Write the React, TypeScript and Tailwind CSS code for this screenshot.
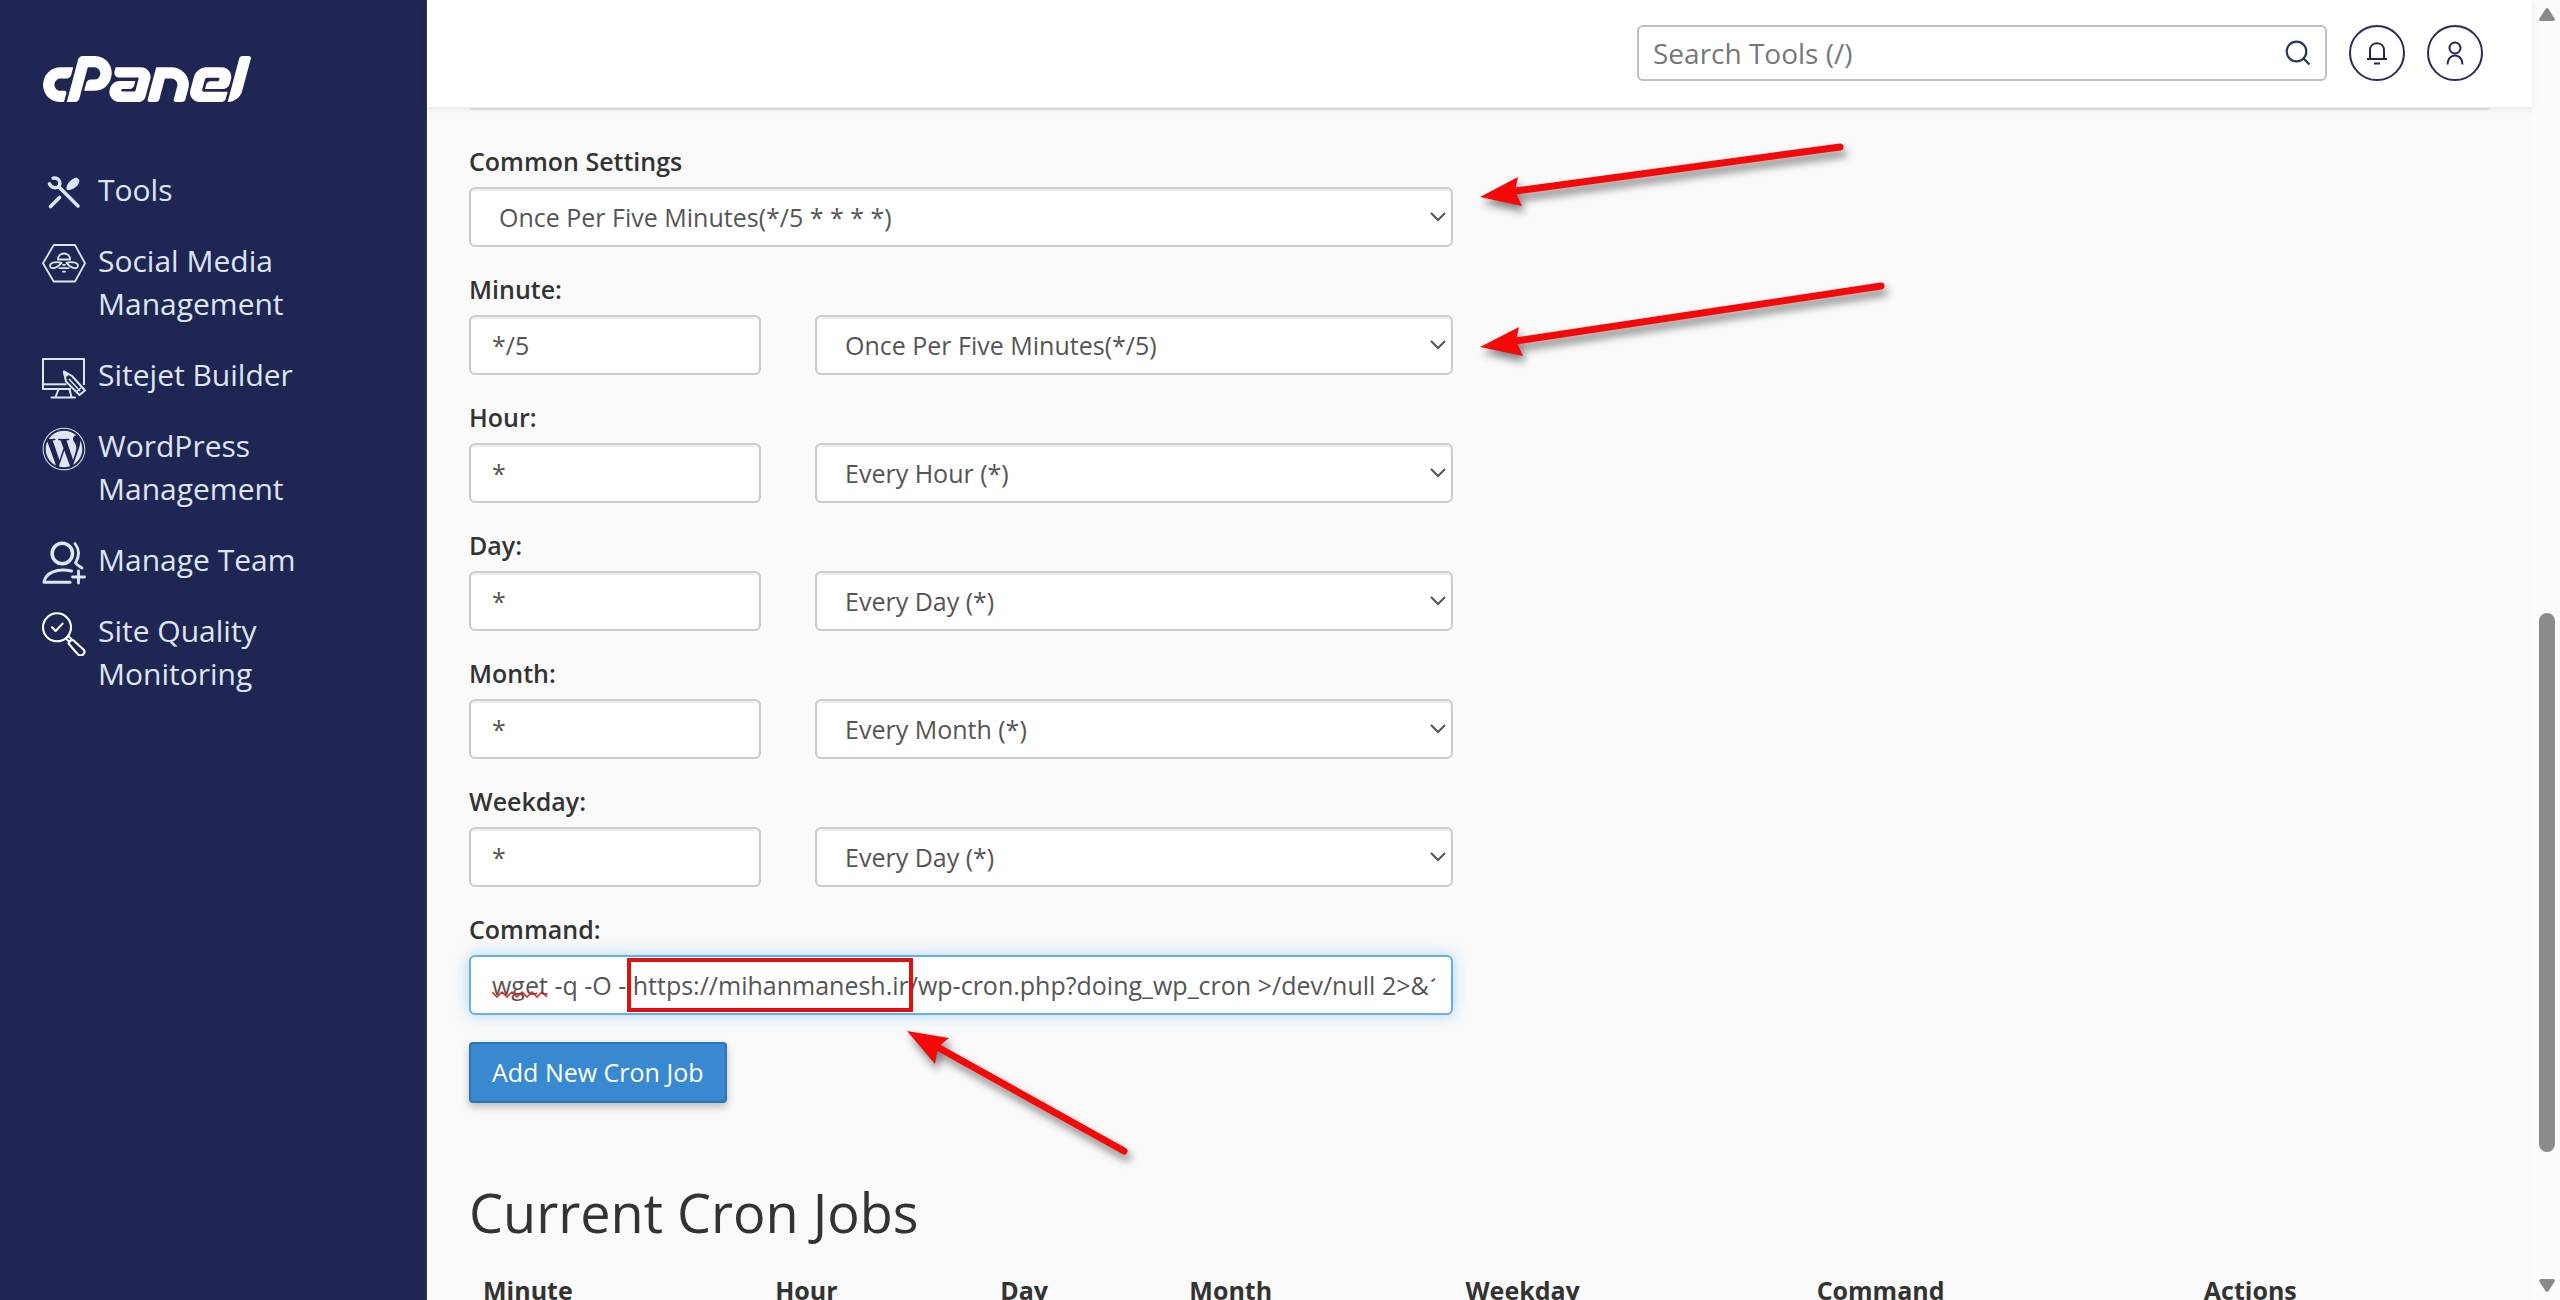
import { type ReactNode } from "react";
import { SiCpanel } from "react-icons/si";
import { FaWordpress } from "react-icons/fa";

function ToolsIcon() {
  return (
    <svg viewBox="0 0 44 44" className="size-11" fill="none" stroke="currentColor" aria-hidden="true">
      <path d="M11 7.200c4.600-1 7.800 2.400 6.600 7-3.200 4-8.200 3-10.200-1.400" strokeWidth="3.400" strokeLinecap="round" />
      <path d="M17 16l19 19" strokeWidth="3.600" strokeLinecap="round" />
      <path d="M8.500 35.500l9-9" strokeWidth="3.600" strokeLinecap="round" />
      <path d="M25 18.500c-.5-4.500 3-10 9.500-11.500l2.500 2c-.5 6-5 8.500-9.500 9.500z" fill="currentColor" strokeWidth="1" strokeLinejoin="round" />
    </svg>
  );
}

function BeeIcon() {
  return (
    <svg viewBox="0 0 44 44" className="size-11" fill="none" stroke="currentColor" strokeWidth="1.800" strokeLinejoin="round" strokeLinecap="round" aria-hidden="true">
      <path d="M1 21.300L11.700 3h21.300L43 21.300 33 39.500H11.700z" />
      <path d="M16 17.500c0-8 12-8 12 0z" />
      <path d="M19.500 20.800c-4-.8-9.500-.6-11.300 1.700-1 2.600 1 4 3.300 3.700 3.500-.6 5.700-2.700 8-5.400z" />
      <path d="M24.500 20.800c4-.8 9.500-.6 11.300 1.700 1 2.600-1 4-3.300 3.700-3.500-.6-5.700-2.700-8-5.400z" />
      <path d="M21 22.800h2M17.500 26.200h9M21 29.700h2" />
    </svg>
  );
}

function BuilderIcon() {
  return (
    <svg viewBox="0 0 44 44" className="size-11" fill="none" stroke="currentColor" strokeWidth="2" strokeLinejoin="round" aria-hidden="true">
      <path d="M42 29V3H1v30h28" />
      <path d="M1 28.300h23.500" />
      <path d="M16.500 33.500l-3 7.500M27.500 33.500l2 7.500M9.500 41.500h23.500" strokeLinecap="round" />
      <path d="M22 15.500l2 10L37.500 39l5.500-4.500L30 20z" />
      <path d="M27 23l11 12M34.500 35.800l5-4.300" strokeWidth="1.500" />
      <path d="M22 15.500l1 5 3.500-2.500z" fill="currentColor" />
    </svg>
  );
}

function TeamIcon() {
  return (
    <svg viewBox="0 0 44 44" className="size-11" fill="none" stroke="currentColor" strokeLinecap="round" aria-hidden="true">
      <circle cx="20.300" cy="12.500" r="10.200" strokeWidth="3.500" />
      <path d="M33 2.500c4.500 6 4.500 13 .5 19.500 2 2.500 4.500 3.500 6.500 5" strokeWidth="2.800" strokeLinejoin="round" />
      <path d="M28 41.300H2C3.500 31.500 15 27 29.500 30" strokeWidth="3.100" strokeLinejoin="round" />
      <path d="M30.500 36h12M36.500 30v12" strokeWidth="2.800" />
    </svg>
  );
}

function QualityIcon() {
  return (
    <svg viewBox="0 0 44 44" className="size-11" fill="none" stroke="#fff" strokeWidth="2.100" strokeLinecap="round" strokeLinejoin="round" aria-hidden="true">
      <circle cx="15" cy="15.300" r="14" />
      <path d="M10 15.300l3.600 3.700 7-7.400" />
      <path d="M24.500 27l3 3M27 24.800l3 3" />
      <path d="M26.500 31.500c.5-2 2-3.500 4.500-3.500l10.500 9.500c3 3.500-2 7.800-5.500 5z" />
    </svg>
  );
}

const menu: { label: string; icon: ReactNode }[] = [
  { label: "Tools", icon: <ToolsIcon /> },
  { label: "Social Media Management", icon: <BeeIcon /> },
  { label: "Sitejet Builder", icon: <BuilderIcon /> },
  { label: "WordPress Management", icon: <FaWordpress className="size-11" aria-hidden="true" /> },
  { label: "Manage Team", icon: <TeamIcon /> },
  { label: "Site Quality Monitoring", icon: <QualityIcon /> },
];

function Sidebar() {
  return (
    <aside className="w-[427px] shrink-0 border-r border-[#3a3a48] bg-[#1f2654] px-[42px] pt-14 text-[#dfe5f2]">
      <a href="#home" aria-label="cPanel" className="block text-white">
        <SiCpanel viewBox="0 9.3449 24 5.3102" className="h-[46px] w-[210px]" aria-hidden="true" />
      </a>
      <nav className="mt-[66px]">
        <ul className="flex flex-col gap-7">
          {menu.map((item) => (
            <li key={item.label}>
              <a href="#menu" className="flex items-start gap-3 text-[30px] leading-[43px]">
                <span className="-mb-1 mt-[3px] size-11 shrink-0">{item.icon}</span>
                <span className="max-w-[220px]">{item.label}</span>
              </a>
            </li>
          ))}
        </ul>
      </nav>
    </aside>
  );
}

function TopBar() {
  return (
    <header className="relative z-10 flex h-[107px] shrink-0 items-start justify-end gap-[22px] bg-white pr-[49px] pt-[25px] text-[#24264f] shadow-[0_2px_8px_rgba(0,0,0,0.08)]">
      <div className="flex h-14 w-[690px] items-center rounded-md border-2 border-[#bfbfbf] bg-white pr-3.5">
        <input
          type="text"
          aria-label="Search Tools"
          placeholder="Search Tools (/)"
          className="min-w-0 flex-1 bg-transparent px-3.5 text-[28px] text-[#777] outline-none placeholder:text-[#777]"
        />
        <button type="button" aria-label="Search">
          <svg viewBox="0 0 26 26" className="size-[26px]" fill="none" stroke="#24385a" strokeWidth="2.200" aria-hidden="true">
            <circle cx="11.500" cy="11.500" r="9.800" />
            <path d="M18.500 18.500l6 6" />
          </svg>
        </button>
      </div>
      <button type="button" aria-label="Notifications" className="flex size-14 items-center justify-center rounded-full border-2 border-[#2b2c58]">
        <svg viewBox="0 0 22 24" className="h-6 w-[22px]" fill="none" stroke="currentColor" strokeWidth="2" aria-hidden="true">
          <path d="M4 18V9c0-9 14-9 14 0v9M1 18h20M8 22.500h6" />
        </svg>
      </button>
      <button type="button" aria-label="Account" className="flex size-14 items-center justify-center rounded-full border-2 border-[#2b2c58]">
        <svg viewBox="0 0 22 24" className="h-6 w-[22px]" fill="none" stroke="currentColor" strokeWidth="2" aria-hidden="true">
          <circle cx="11" cy="7" r="5.500" />
          <path d="M3.500 23.500c0-12 15-12 15 0" />
        </svg>
      </button>
    </header>
  );
}

function SelectBox({ id, label, value }: { id: string; label?: string; value: string }) {
  return (
    <div className="relative min-w-0 flex-1">
      <select
        id={id}
        aria-label={label}
        className="h-[60px] w-full appearance-none rounded-md border-2 border-[#ccc] bg-white pl-7 pr-10 pt-0.5 text-[25px] text-[#555] shadow-[inset_0_2px_2px_rgba(0,0,0,0.07)]"
      >
        <option>{value}</option>
      </select>
      <svg viewBox="0 0 16 10" className="pointer-events-none absolute right-[7px] top-[25px] h-2.5 w-4" fill="none" stroke="#555" strokeWidth="2" aria-hidden="true">
        <path d="M1 1l7 7 7-7" />
      </svg>
    </div>
  );
}

const labelClass = "block text-[25px] font-semibold leading-9 text-[#333]";

const fields = [
  { id: "minute", label: "Minute:", value: "*/5", option: "Once Per Five Minutes(*/5)" },
  { id: "hour", label: "Hour:", value: "*", option: "Every Hour (*)" },
  { id: "day", label: "Day:", value: "*", option: "Every Day (*)" },
  { id: "month", label: "Month:", value: "*", option: "Every Month (*)" },
  { id: "weekday", label: "Weekday:", value: "*", option: "Every Day (*)" },
];

/* Red pointer arrows drawn over the form; coordinates start at the form's top left corner. */
function Arrows() {
  return (
    <svg
      className="pointer-events-none absolute left-0 top-0 h-full w-full overflow-visible drop-shadow-[3px_6px_4px_rgba(0,0,0,0.5)]"
      fill="#f60808"
      stroke="#f60808"
      aria-hidden="true"
    >
      <g strokeWidth="7" strokeLinecap="round">
        <path d="M1047 48L1371 4" />
        <path d="M1047 198L1412 143" />
        <path d="M470 905L655 1008" />
      </g>
      <g stroke="none">
        <path d="M1011 54L1049 34 1046 48 1053 63z" />
        <path d="M1011 204L1050 184 1047 198 1054 213z" />
        <path d="M438 888L480 895 469 904 466 921z" />
      </g>
    </svg>
  );
}

function CronForm() {
  return (
    <form className="relative flex w-full max-w-[984px] flex-col gap-6" onSubmit={(e) => e.preventDefault()}>
      <div>
        <label htmlFor="common" className={labelClass}>Common Settings</label>
        <div className="mt-2 flex">
          <SelectBox id="common" value="Once Per Five Minutes(*/5 * * * *)" />
        </div>
      </div>
      {fields.map((f) => (
        <div key={f.id}>
          <label htmlFor={f.id} className={labelClass}>{f.label}</label>
          <div className="mt-2 flex gap-[54px]">
            <input
              id={f.id}
              defaultValue={f.value}
              spellCheck={false}
              className="h-[60px] w-[292px] rounded-md border-2 border-[#ccc] bg-white px-[21px] text-[25px] text-[#555] shadow-[inset_0_2px_2px_rgba(0,0,0,0.07)]"
            />
            <SelectBox id={f.id + "-preset"} label={f.label + " preset"} value={f.option} />
          </div>
        </div>
      ))}
      <div>
        <label htmlFor="command" className={labelClass}>Command:</label>
        <div className="relative mt-2">
          <input
            id="command"
            spellCheck={false}
            defaultValue="wget -q -O - https://mihanmanesh.ir/wp-cron.php?doing_wp_cron >/dev/null 2>&1"
            className="block h-[60px] w-full rounded-md border-2 border-[#66afe9] bg-white pl-[21px] pr-4 text-[25px] text-[#555] shadow-[0_0_16px_rgba(102,175,233,0.5)] outline-none"
          />
          <svg viewBox="0 0 56 7" className="pointer-events-none absolute left-[23px] top-9 h-[7px] w-14" fill="none" stroke="#e02020" strokeWidth="1.500" aria-hidden="true">
            <path d="M0 1l5 5 5-5 5 5 5-5 5 5 5-5 5 5 5-5 5 5 5-5 5 5" />
          </svg>
          <span className="pointer-events-none absolute left-[158px] top-[3px] h-[54px] w-[286px] border-4 border-[#e01010]" />
        </div>
      </div>
      <button
        type="submit"
        className="mt-[3px] h-[61px] self-start rounded border-2 border-[#2e75b3] bg-[#3889cf] px-[21px] text-[25px] text-white shadow-[0_4px_8px_rgba(0,0,0,0.25)]"
      >
        Add New Cron Job
      </button>
      <Arrows />
    </form>
  );
}

function JobsTable() {
  return (
    <table className="mt-[30px] w-full table-fixed text-left text-[25px] leading-9 text-[#333]">
      <thead>
        <tr>
          <th scope="col" className="w-[292px] px-3.5">Minute</th>
          <th scope="col" className="w-[225px] px-3.5">Hour</th>
          <th scope="col" className="w-[189px] px-3.5">Day</th>
          <th scope="col" className="w-[276px] px-3.5">Month</th>
          <th scope="col" className="w-[351px] px-3.5">Weekday</th>
          <th scope="col" className="w-[387px] px-3.5">Command</th>
          <th scope="col" className="w-[300px] px-3.5">Actions</th>
        </tr>
      </thead>
    </table>
  );
}

function ScrollTrack() {
  return (
    <div className="flex w-7 shrink-0 flex-col items-center bg-[#fcfcfc] pb-2 pl-0.5 pt-2" aria-hidden="true">
      <svg viewBox="0 0 16 13" className="h-[13px] w-4" fill="#8b8b8b">
        <path d="M8 0q1 0 1.500 1L16 11q0 2-2 2H2q-2 0-2-2L6.500 1Q7 0 8 0z" />
      </svg>
      <span className="flex-[592]" />
      <span className="w-4 flex-[540] rounded-full bg-[#8b8b8b]" />
      <span className="flex-[127]" />
      <svg viewBox="0 0 16 13" className="h-[13px] w-4" fill="#8b8b8b">
        <path d="M8 13q1 0 1.500-1L16 2q0-2-2-2H2Q0 0 0 2l6.500 10Q7 13 8 13z" />
      </svg>
    </div>
  );
}

export default function App() {
  return (
    <div className="flex h-screen overflow-hidden bg-[#fafafa] font-['Open_Sans',sans-serif]">
      <Sidebar />
      <div className="flex min-w-0 flex-1 flex-col">
        <TopBar />
        <main className="min-h-0 flex-1 overflow-hidden px-[42px]">
          <div className="h-[3px] rounded-b border-b-2 border-[#e2e2e2]" />
          <div className="pt-[33px]">
            <CronForm />
            <h2 className="mt-[79px] text-[54px] leading-[60px] text-[#333]">Current Cron Jobs</h2>
            <JobsTable />
          </div>
        </main>
      </div>
      <ScrollTrack />
    </div>
  );
}
